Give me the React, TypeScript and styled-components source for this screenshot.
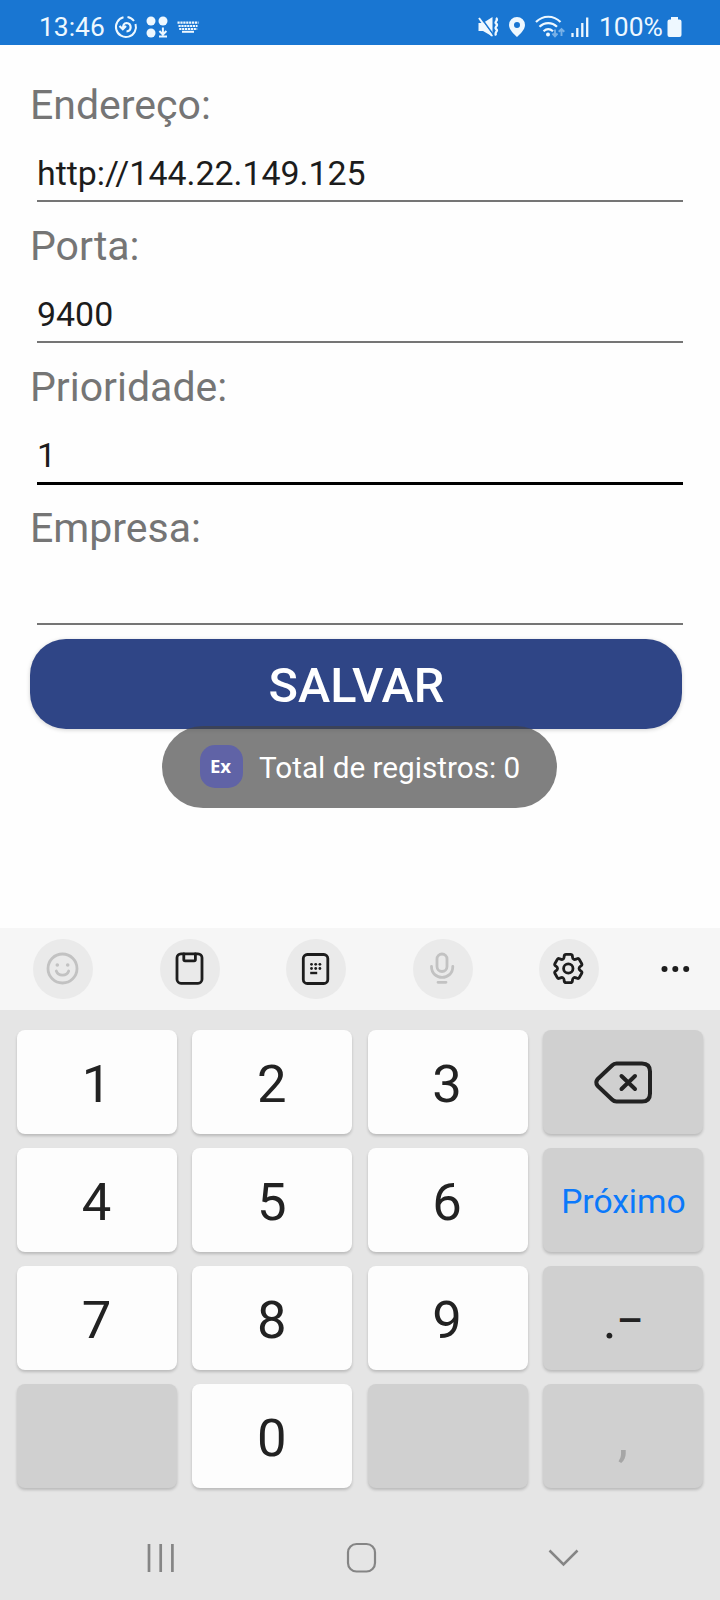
import React from "react";
import styled, { createGlobalStyle } from "styled-components";

const GlobalStyle = createGlobalStyle`
  * { box-sizing: border-box; }
  body { margin: 0; background: #fefefe; font-family: Roboto, "Liberation Sans", sans-serif; }
`;

const Screen = styled.div`
  position: relative;
  display: flex;
  flex-direction: column;
  width: 720px;
  height: 1600px;
  overflow: hidden;
  background: #fefefe;
`;

const StatusBar = styled.header`
  display: flex;
  flex: none;
  justify-content: space-between;
  height: 45px;
  padding: 9px 38px 0 39px;
  background: #1976d2;
  color: #eef8ff;
`;

const StatusGroup = styled.div`
  display: flex;
  align-items: center;
  height: 35px;
`;

const StatusText = styled.span<{ $width: number; $indent?: number }>`
  width: ${(p) => p.$width}px;
  margin-left: ${(p) => p.$indent ?? 0}px;
  font-size: 26.4px;
  line-height: 36px;
  white-space: nowrap;
`;

const StatusIcon = styled.svg<{ $gap: number }>`
  flex: none;
  margin-left: ${(p) => p.$gap}px;
`;

const Form = styled.main`
  display: flex;
  flex: none;
  flex-direction: column;
  height: 883px;
  padding: 30px 38px 0 30px;
`;

const Field = styled.div`
  height: 141px;
`;

const Label = styled.div`
  height: 60px;
  font-size: 41px;
  line-height: 60px;
  color: #757575;
`;

const Value = styled.div<{ $focused?: boolean }>`
  width: 646px;
  height: ${(p) => (p.$focused ? 68 : 67)}px;
  margin-left: 7px;
  padding-top: 14px;
  border-bottom: ${(p) => (p.$focused ? "3px solid #000" : "2px solid #757575")};
  font-size: 33.9px;
  line-height: 49px;
  color: #1c1c1c;
`;

const SaveButton = styled.button`
  flex: none;
  width: 652px;
  height: 90px;
  padding: 4px 0 1px 1px;
  border: 0;
  border-radius: 36px;
  background: #2f4586;
  color: #fff;
  font: 500 48.600px/85px Roboto, sans-serif;
  box-shadow: 0 1px 4px rgba(0, 0, 0, 0.18);
`;

const Toast = styled.div`
  position: absolute;
  top: 726px;
  left: 162px;
  display: flex;
  align-items: center;
  gap: 16px;
  width: 395px;
  height: 82px;
  padding-left: 38px;
  border-radius: 41px;
  background: rgba(65, 65, 65, 0.67);
  color: #fff;
  font-size: 29.7px;
  white-space: nowrap;
`;

const AppBadge = styled.span`
  width: 43px;
  height: 43px;
  margin-bottom: 1px;
  padding-right: 2px;
  border-radius: 15px;
  background: #6063a6;
  font: 700 18.600px/42px "Open Sans", sans-serif;
  text-align: center;
`;

const Toolbar = styled.div`
  display: flex;
  flex: none;
  align-items: center;
  gap: 66.5px;
  height: 82px;
  padding-left: 33px;
  background: #f6f6f6;
`;

const ToolButton = styled.div<{ $plain?: boolean }>`
  display: flex;
  flex: none;
  width: 60px;
  height: 60px;
  border-radius: 50%;
  background: ${(p) => (p.$plain ? "transparent" : "#eaeaea")};
  margin-left: ${(p) => (p.$plain ? -21 : 0)}px;
`;

const Keyboard = styled.section`
  flex: none;
  height: 590px;
  padding: 20px 17px 0;
  background: #e5e5e5;
`;

const Keys = styled.div`
  display: grid;
  grid-template-columns: repeat(4, 160px);
  grid-auto-rows: 104px;
  gap: 14px 15.3px;
`;

const Key = styled.div<{ $dark?: boolean }>`
  display: flex;
  align-items: center;
  justify-content: center;
  padding: 3px 1px 0 0;
  border-radius: 8px;
  background: ${(p) => (p.$dark ? "#d0d0d0" : "#fdfdfd")};
  box-shadow: 0 2px 3px rgba(0, 0, 0, 0.19);
  color: #222;
  font-size: 52.6px;
  line-height: 60px;
`;

const ActionLabel = styled.span`
  padding-left: 2px;
  font-size: 33.6px;
  color: #0b79fb;
`;

const Punctuation = styled.span<{ $faded?: boolean }>`
  padding-left: 1px;
  color: ${(p) => (p.$faded ? "#a6a6a6" : "#222")};
`;

const Dash = styled.span`
  font-size: 41px;
  font-weight: 500;
  line-height: 1;
  vertical-align: 4px;
`;

const Navigation = styled.nav`
  display: flex;
  align-items: center;
  height: 92px;
  margin-top: 24px;
  padding-left: 130px;
  gap: 170.5px;
`;

const NavIcon = styled.svg`
  flex: none;
  width: 30px;
  height: 32px;
  overflow: visible;
  fill: none;
  stroke: #858585;
`;

const TimerIcon = () => (
  <StatusIcon $gap={0} width="24" height="24" viewBox="0 0 24 24" fill="none" stroke="currentColor" strokeWidth="2">
    <path d="M9.500 2.300A10 10 0 1 0 21.500 9M20 6A10 10 0 0 0 13.500 2.100" />
    <path d="M5.500 11l3.300 3.300L12 11M9 13.500c0-3 1-5.500 3.500-5.500 5.500.5 5.500 8 0 8.500" strokeWidth="2.200" />
  </StatusIcon>
);

const AppsIcon = () => (
  <StatusIcon $gap={8} width="22" height="22" viewBox="0 0 22 22" fill="currentColor">
    <circle cx="5" cy="5" r="4.500" /><circle cx="17" cy="5" r="4.500" /><circle cx="5" cy="17" r="4.500" />
    <path d="M16.900 11.500v7m-3.500-3.500 3.500 3.500 3.500-3.500M13 20.500h8" fill="none" stroke="currentColor" strokeWidth="2" />
  </StatusIcon>
);

const KeyboardIcon = () => (
  <StatusIcon $gap={9} width="22" height="12" viewBox="0 0 22 12" stroke="currentColor" fill="none">
    <path d="M.5 1.700h21M1.500 5h19M2.200 8h18" strokeWidth="2.200" strokeDasharray="2.200 .7" />
    <path d="M5 10.800h12" strokeWidth="2" />
  </StatusIcon>
);

const MuteIcon = () => (
  <StatusIcon $gap={0} width="21" height="22" viewBox="0 0 21 22" fill="none" stroke="currentColor">
    <path d="M.5 7h4.500L14.500 1v19.500L5 15H.5z" fill="currentColor" stroke="none" />
    <path d="M2.700 1.200 15.500 19" stroke="#1976d2" strokeWidth="1.600" />
    <path d="M1 2 14 20" strokeWidth="2" />
    <path d="M18 2c3 2.500-2 3.500 0 5.500 3 2-2 3.500 0 5.500 3 2-2 3 0 6.500" strokeWidth="2.300" />
  </StatusIcon>
);

const PinIcon = () => (
  <StatusIcon $gap={10} width="16" height="22" viewBox="0 0 16 22" fill="currentColor">
    <path fillRule="evenodd" d="M8 1a8 8 0 0 0-8 8c0 5 5.500 9.500 8 12 2.500-2.500 8-7 8-12a8 8 0 0 0-8-8Zm0 5a3 3 0 1 1 0 6 3 3 0 0 1 0-6Z" />
  </StatusIcon>
);

const WifiIcon = () => (
  <StatusIcon $gap={10} width="31" height="24" viewBox="0 0 31 24" fill="none" stroke="currentColor" strokeWidth="2.200">
    <path d="M1 7c7-7 17.500-7 24.500 0M4.500 11.800c5-5 12.500-5 17.500 0M8.500 16.200c3-2.700 6.500-2.700 9.500 0" />
    <circle cx="13" cy="19.500" r="2" fill="currentColor" stroke="none" />
    <path d="M20 14.500v6.500m-2.500-2.500 2.500 2.800 2.500-2.800M26.500 21v-7m-2.800 2.700 2.800-2.700 2.800 2.700" opacity=".45" strokeWidth="1.900" />
  </StatusIcon>
);

const SignalIcon = () => (
  <StatusIcon $gap={5} width="18" height="22" viewBox="0 0 18 22" stroke="currentColor" strokeWidth="2.300">
    <path d="M1.500 21v-4M6.300 21V12M11.300 21V7M16.200 21V1.500" />
  </StatusIcon>
);

const BatteryIcon = () => (
  <StatusIcon $gap={3} width="15" height="22" viewBox="0 0 15 22" fill="currentColor">
    <path d="M4 1h7v2.500h1.500a2 2 0 0 1 2 2V19a2 2 0 0 1-2 2h-10a2 2 0 0 1-2-2V5.500a2 2 0 0 1 2-2H4z" />
  </StatusIcon>
);

const ToolIcon = styled.svg.attrs({ viewBox: "0 0 60 60", fill: "none" })<{ $faded?: boolean }>`
  width: 60px;
  height: 60px;
  stroke: ${(p) => (p.$faded ? "#c2c2c2" : "#1d1d1d")};
  color: ${(p) => (p.$faded ? "#c2c2c2" : "#1d1d1d")};
  stroke-width: 2.8px;
  stroke-linecap: round;
  stroke-linejoin: round;
`;

// Outline of a six-toothed wheel with every corner rounded off.
const gearPath = (() => {
  const points: [number, number][] = [];
  for (let i = 0; i < 6; i++) {
    const base = (i * Math.PI) / 3 - Math.PI / 2;
    for (const [r, a] of [[10.8, -0.42], [14.6, -0.27], [14.6, 0.27], [10.8, 0.42]]) {
      points.push([29.3 + r * Math.cos(base + a), 29.5 + r * Math.sin(base + a)]);
    }
  }
  const toward = (from: [number, number], to: [number, number]) => {
    const length = Math.hypot(to[0] - from[0], to[1] - from[1]);
    const k = Math.min(0.45, 1.6 / length);
    return `${(from[0] + (to[0] - from[0]) * k).toFixed(2)} ${(from[1] + (to[1] - from[1]) * k).toFixed(2)}`;
  };
  const count = points.length;
  return (
    points
      .map((p, i) => {
        const before = points[(i + count - 1) % count];
        const after = points[(i + 1) % count];
        return `${i ? "L" : "M"}${toward(p, before)}Q${p[0].toFixed(2)} ${p[1].toFixed(2)} ${toward(p, after)}`;
      })
      .join("") + "Z"
  );
})();

const dots = [25.5, 29.7, 33.9];

const fields = [
  { label: "Endereço:", value: "http://144.22.149.125" },
  { label: "Porta:", value: "9400" },
  { label: "Prioridade:", value: "1", focused: true },
  { label: "Empresa:", value: "" },
];

export default function App() {
  return (
    <Screen>
      <GlobalStyle />
      <StatusBar>
        <StatusGroup>
          <StatusText $width={75}>13:46</StatusText>
          <TimerIcon />
          <AppsIcon />
          <KeyboardIcon />
        </StatusGroup>
        <StatusGroup>
          <MuteIcon />
          <PinIcon />
          <WifiIcon />
          <SignalIcon />
          <StatusText $width={65} $indent={10}>100%</StatusText>
          <BatteryIcon />
        </StatusGroup>
      </StatusBar>

      <Form>
        {fields.map((f) => (
          <Field key={f.label}>
            <Label>{f.label}</Label>
            <Value $focused={f.focused}>{f.value}</Value>
          </Field>
        ))}
        <SaveButton>SALVAR</SaveButton>
      </Form>

      <Toolbar>
        <ToolButton>
          <ToolIcon $faded>
            <circle cx="29.500" cy="29.500" r="14.500" />
            <circle cx="24.300" cy="26" r="1.800" fill="currentColor" stroke="none" />
            <circle cx="34.700" cy="26" r="1.800" fill="currentColor" stroke="none" />
            <path d="M23.300 32c2 5.500 10.400 5.500 12.400 0" />
          </ToolIcon>
        </ToolButton>
        <ToolButton>
          <ToolIcon>
            <rect x="17" y="14.800" width="25" height="29.500" rx="4" />
            <path d="M23.800 15v5.500q0 1.300 1.300 1.300h9q1.300 0 1.300-1.300V15" />
          </ToolIcon>
        </ToolButton>
        <ToolButton>
          <ToolIcon>
            <rect x="17.300" y="15.500" width="24.500" height="29" rx="4" />
            {dots.map((x) => (
              <React.Fragment key={x}>
                <circle cx={x} cy="25.300" r="1.400" fill="currentColor" stroke="none" />
                <circle cx={x} cy="29.500" r="1.400" fill="currentColor" stroke="none" />
              </React.Fragment>
            ))}
            <rect x="24.200" y="32.800" width="7" height="2.400" fill="currentColor" stroke="none" />
          </ToolIcon>
        </ToolButton>
        <ToolButton>
          <ToolIcon $faded>
            <rect x="24" y="15" width="10" height="17.500" rx="5" />
            <path d="M18.500 27.500c0 14.500 21.300 14.500 21.300 0M25 43.300h8" />
          </ToolIcon>
        </ToolButton>
        <ToolButton>
          <ToolIcon>
            <path d={gearPath} />
            <circle cx="29.300" cy="29.500" r="4.700" />
          </ToolIcon>
        </ToolButton>
        <ToolButton $plain>
          <ToolIcon>
            <g fill="currentColor" stroke="none">
              <circle cx="19.500" cy="30" r="3" /><circle cx="30.300" cy="30" r="3" /><circle cx="41.200" cy="30" r="3" />
            </g>
          </ToolIcon>
        </ToolButton>
      </Toolbar>

      <Keyboard>
        <Keys>
          <Key>1</Key><Key>2</Key><Key>3</Key>
          <Key $dark>
            <svg width="60" height="46" viewBox="-3.500 0 60 46" fill="none" stroke="#222" strokeWidth="4" strokeLinecap="round" strokeLinejoin="round">
              <path d="M21 2.500h25.500q8 0 8 8v22q0 8-8 8H21q-2.500 0-4.500-2L2 24.700q-2.500-3.200 0-6.400L16.500 4.500q2-2 4.500-2Z" />
              <path d="m26 15 13.500 13M39.500 15 26 28" />
            </svg>
          </Key>
          <Key>4</Key><Key>5</Key><Key>6</Key>
          <Key $dark><ActionLabel>Próximo</ActionLabel></Key>
          <Key>7</Key><Key>8</Key><Key>9</Key>
          <Key $dark><Punctuation>.<Dash>–</Dash></Punctuation></Key>
          <Key $dark /><Key>0</Key><Key $dark />
          <Key $dark><Punctuation $faded>,</Punctuation></Key>
        </Keys>
        <Navigation>
          <NavIcon viewBox="0 0 30 32" strokeWidth="2.700"><path d="M2 2v28M13.700 2v28M25.400 2v28" /></NavIcon>
          <NavIcon viewBox="0 0 30 32" strokeWidth="2.200"><rect x="0" y="2" width="27" height="27.500" rx="8.500" /></NavIcon>
          <NavIcon viewBox="0 0 30 32" strokeWidth="2.500"><path d="m1.500 8.500 14 14 14-14" /></NavIcon>
        </Navigation>
      </Keyboard>

      <Toast>
        <AppBadge>Ex</AppBadge>
        <span>Total de registros: 0</span>
      </Toast>
    </Screen>
  );
}
